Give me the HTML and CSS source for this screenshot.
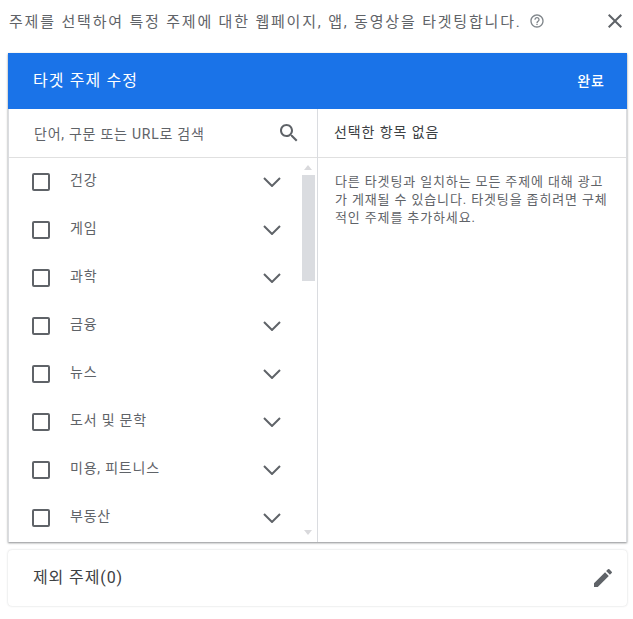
FILE: index.html
```html
<!DOCTYPE html>
<html lang="ko">
<head>
<meta charset="utf-8">
<title>타겟 주제 수정</title>
<link rel="stylesheet" href="styles.css">
</head>
<body>
<div class="top">
  <span class="intro">주제를 선택하여 특정 주제에 대한 웹페이지, 앱, 동영상을 타겟팅합니다.</span>
  <svg class="help" viewBox="0 0 24 24" width="16" height="16"><path fill="#80868b" d="M11 18h2v-2h-2v2zm1-16C6.48 2 2 6.48 2 12s4.48 10 10 10 10-4.48 10-10S17.52 2 12 2zm0 18c-4.41 0-8-3.59-8-8s3.59-8 8-8 8 3.59 8 8-3.59 8-8 8zm0-14c-2.21 0-4 1.79-4 4h2c0-1.1.9-2 2-2s2 .9 2 2c0 2-3 1.75-3 5h2c0-2.25 3-2.5 3-5 0-2.21-1.79-4-4-4z"/></svg>
  <svg class="close" viewBox="0 0 24 24" width="24" height="24"><path fill="#5f6368" d="M19 6.41 17.59 5 12 10.59 6.41 5 5 6.41 10.59 12 5 17.59 6.41 19 12 13.41 17.59 19 19 17.59 13.41 12z"/></svg>
</div>
<section class="card">
  <header class="head">
    <span class="head-title">타겟 주제 수정</span>
    <span class="head-done">완료</span>
  </header>
  <div class="cols">
    <div class="left">
      <div class="search">
        <span class="search-text">단어, 구문 또는 URL로 검색</span>
        <svg viewBox="0 0 24 24" width="24" height="24"><path fill="#5f6368" d="M15.5 14h-.79l-.28-.27C15.41 12.59 16 11.11 16 9.5 16 5.91 13.09 3 9.500 3S3 5.910 3 9.500 5.910 16 9.500 16c1.610 0 3.090-.59 4.230-1.570l.27.28v.79l5 4.990L20.490 19l-4.990-5zm-6 0C7.010 14 5 11.990 5 9.500S7.010 5 9.500 5 14 7.010 14 9.500 11.990 14 9.500 14z"/></svg>
      </div>
      <div class="list-wrap">
        <ul class="list">
          <li class="row"><span class="box"></span><span class="label">건강</span><svg class="chev" viewBox="0 0 18 10" width="18" height="10"><path d="M1 1l8 8 8-8" fill="none" stroke="#5f6368" stroke-width="2"/></svg></li>
          <li class="row"><span class="box"></span><span class="label">게임</span><svg class="chev" viewBox="0 0 18 10" width="18" height="10"><path d="M1 1l8 8 8-8" fill="none" stroke="#5f6368" stroke-width="2"/></svg></li>
          <li class="row"><span class="box"></span><span class="label">과학</span><svg class="chev" viewBox="0 0 18 10" width="18" height="10"><path d="M1 1l8 8 8-8" fill="none" stroke="#5f6368" stroke-width="2"/></svg></li>
          <li class="row"><span class="box"></span><span class="label">금융</span><svg class="chev" viewBox="0 0 18 10" width="18" height="10"><path d="M1 1l8 8 8-8" fill="none" stroke="#5f6368" stroke-width="2"/></svg></li>
          <li class="row"><span class="box"></span><span class="label">뉴스</span><svg class="chev" viewBox="0 0 18 10" width="18" height="10"><path d="M1 1l8 8 8-8" fill="none" stroke="#5f6368" stroke-width="2"/></svg></li>
          <li class="row"><span class="box"></span><span class="label">도서 및 문학</span><svg class="chev" viewBox="0 0 18 10" width="18" height="10"><path d="M1 1l8 8 8-8" fill="none" stroke="#5f6368" stroke-width="2"/></svg></li>
          <li class="row"><span class="box"></span><span class="label">미용, 피트니스</span><svg class="chev" viewBox="0 0 18 10" width="18" height="10"><path d="M1 1l8 8 8-8" fill="none" stroke="#5f6368" stroke-width="2"/></svg></li>
          <li class="row"><span class="box"></span><span class="label">부동산</span><svg class="chev" viewBox="0 0 18 10" width="18" height="10"><path d="M1 1l8 8 8-8" fill="none" stroke="#5f6368" stroke-width="2"/></svg></li>
        </ul>
        <div class="scroll">
          <svg viewBox="0 0 8 5" width="8" height="5"><path d="M0 5l4-5 4 5z" fill="#d9d9dc"/></svg>
          <div class="thumb"></div>
          <svg class="scroll-down" viewBox="0 0 8 5" width="8" height="5"><path d="M0 0l4 5 4-5z" fill="#d9d9dc"/></svg>
        </div>
      </div>
    </div>
    <div class="right">
      <div class="sel-head">선택한 항목 없음</div>
      <p class="sel-note">다른 타겟팅과 일치하는 모든 주제에 대해 광고가 게재될 수 있습니다. 타겟팅을 좁히려면 구체적인 주제를 추가하세요.</p>
    </div>
  </div>
</section>
<section class="excl">
  <span class="excl-title">제외 주제(0)</span>
  <svg viewBox="0 0 24 24" width="24" height="24"><path fill="#5f6368" d="M3 17.250V21h3.750L17.810 9.940l-3.750-3.750L3 17.250zM20.710 7.040a1 1 0 0 0 0-1.410l-2.340-2.340a1 1 0 0 0-1.410 0l-1.830 1.830 3.750 3.750 1.830-1.830z"/></svg>
</section>
</body>
</html>
```
FILE: styles.css
```css
* { box-sizing: border-box; }
html, body { margin: 0; padding: 0; }
body {
  width: 633px;
  height: 619px;
  overflow: hidden;
  background: #fff;
  font-family: Roboto, "Noto Sans CJK KR", sans-serif;
  color: #3c4043;
}
.top {
  display: flex;
  align-items: center;
  height: 53px;
  padding: 0 6px 11px 9px;
}
.intro { font-size: 15px; letter-spacing: 1.82px; color: #5f6368; white-space: nowrap; margin-bottom: 2px; }
.help { margin-left: 7px; flex: none; }
.close { margin-left: auto; flex: none; }
.card {
  width: 619px;
  margin-left: 8px;
  height: 489px;
  box-shadow: 0 1px 2px rgba(60,64,67,.6);
  background: #fff;
  display: flex;
  flex-direction: column;
}
.head {
  height: 56px;
  flex: none;
  background: #1a73e8;
  color: #fff;
  display: flex;
  align-items: center;
  justify-content: space-between;
  padding: 0 22px 0 25px;
}
.head-title { font-size: 16px; letter-spacing: 1.1px; margin-bottom: 5px; }
.head-done { font-size: 14px; font-weight: 500; letter-spacing: 1px; margin-bottom: 3px; }
.cols {
  flex: 1;
  display: flex;
  min-height: 0;
  border-left: 1px solid #dadce0;
  border-right: 1px solid #dadce0;
}
.left { width: 309px; flex: none; border-right: 1px solid #dadce0; display: flex; flex-direction: column; min-height: 0; }
.search {
  height: 49px;
  flex: none;
  border-bottom: 1px solid #e0e0e0;
  display: flex;
  align-items: center;
  justify-content: space-between;
  padding: 0 16px 0 25px;
}
.search-text { font-size: 14px; letter-spacing: .75px; color: #5f6368; }
.list-wrap { flex: 1; display: flex; min-height: 0; }
.list { list-style: none; margin: 0; padding: 0; flex: 1; }
.row {
  height: 48px;
  display: flex;
  align-items: center;
  padding: 0 20px 0 23px;
}
.box { width: 18px; height: 18px; border: 2px solid #5f6368; border-radius: 2px; flex: none; }
.label { margin-left: 20px; font-size: 14px; letter-spacing: .8px; color: #5f6368; margin-bottom: 6px; }
.chev { margin-left: auto; flex: none; }
.scroll {
  width: 14px;
  margin-right: 2px;
  flex: none;
  display: flex;
  flex-direction: column;
  align-items: center;
  padding-top: 7px;
  padding-bottom: 7px;
}
.thumb { width: 13px; height: 106px; margin-top: 5px; background: #dadce0; }
.scroll-down { margin-top: auto; }
.right { flex: 1; min-width: 0; }
.sel-head {
  height: 49px;
  border-bottom: 1px solid #e0e0e0;
  display: flex;
  align-items: center;
  padding: 0 0 4px 16px;
  font-size: 14px;
  letter-spacing: .9px;
  color: #3c4043;
}
.sel-note {
  margin: 15px 14px 0 17px;
  font-size: 13px;
  letter-spacing: .87px;
  line-height: 18px;
  color: #5f6368;
  word-break: break-all;
}
.excl {
  width: 619px;
  margin: 8px 0 0 8px;
  height: 56px;
  border-radius: 4px;
  box-shadow: 0 0 2px rgba(60,64,67,.25);
  display: flex;
  align-items: center;
  justify-content: space-between;
  padding: 0 12px 1px 25px;
}
.excl-title { font-size: 16px; letter-spacing: .9px; color: #3c4043; margin-bottom: 3px; }
```
